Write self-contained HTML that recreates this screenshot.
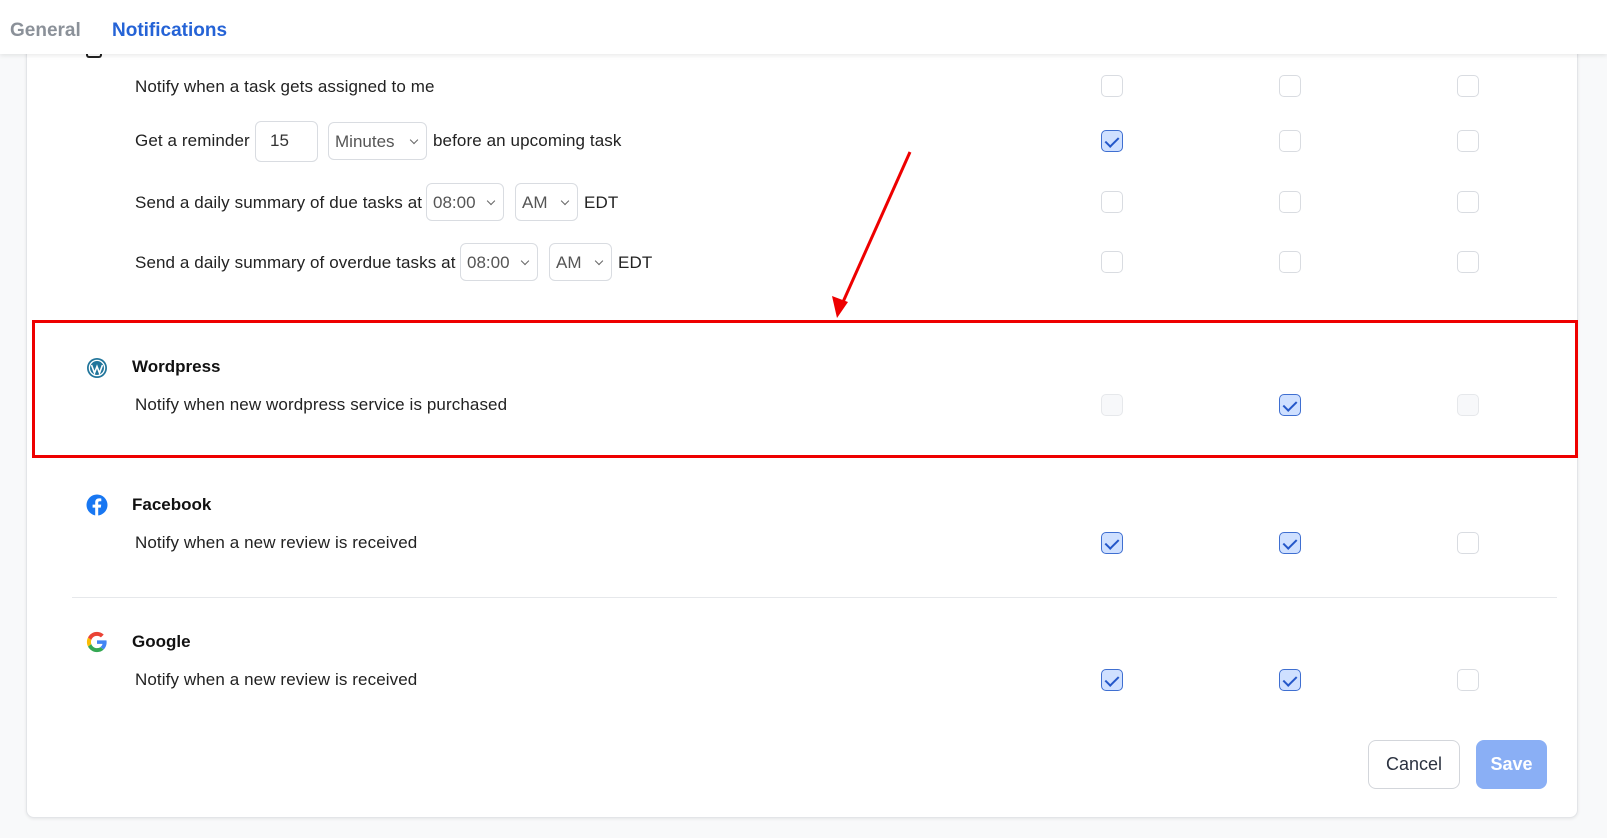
<!DOCTYPE html>
<html><head><meta charset="utf-8"><style>
*{box-sizing:border-box;margin:0;padding:0}
body{width:1607px;height:838px;background:#f8f9fa;font-family:"Liberation Sans",sans-serif;position:relative;overflow:hidden;color:#1f2328}
.card{position:absolute;left:26px;top:0;width:1552px;height:818px;background:#fff;border:1px solid #e3e5e8;border-radius:8px;box-shadow:0 1px 3px rgba(0,0,0,.08)}
.hdr{position:absolute;left:0;top:0;width:1607px;height:54px;background:#fff;box-shadow:0 2px 4px rgba(0,0,0,.08);z-index:5}
.tab{position:absolute;top:20px;font-size:19px;font-weight:bold}
.t{position:absolute;font-size:17px;letter-spacing:0.1px;white-space:nowrap;line-height:20px;color:#222}
.h{position:absolute;font-size:17px;font-weight:bold;line-height:20px;color:#111}
.cb{position:absolute;width:22px;height:22px;border:1.5px solid #d9dce1;border-radius:5px;background:#fff}
.cb.d{background:#f7f8fa;border-color:#e6e8eb}
.cb.c{background:#cfe0ff;border-color:#3f6fd1}
.cb.c::after{content:"";position:absolute;left:6px;top:2.5px;width:6px;height:11px;border:solid #2457c9;border-width:0 2.5px 2.5px 0;transform:rotate(45deg)}
.sel{position:absolute;height:38px;border:1px solid #d9dce1;border-radius:6px;font-size:17px;color:#555;padding:9px 6px;line-height:20px}
.sel.dd::after{content:"";position:absolute;right:9px;top:14px;width:5px;height:5px;border:solid #666;border-width:0 1.3px 1.3px 0;transform:rotate(45deg)}
</style></head><body>
<div class="card"></div>
<div class="hdr">
<div class="tab" style="left:10px;color:#8b9199">General</div>
<div class="tab" style="left:112px;color:#2563d6">Notifications</div>
</div>
<div style="position:absolute;left:86px;top:48px;width:16px;height:10px;border:2px solid #222;border-top:none;border-radius:0 0 3px 3px"></div>

<div class="t" style="left:135px;top:77px">Notify when a task gets assigned to me</div>
<div class="t" style="left:135px;top:131px">Get a reminder</div>
<div class="sel" style="left:255px;top:121px;width:63px;height:41px;color:#333;padding-left:14px">15</div>
<div class="sel dd" style="left:328px;top:122px;width:99px;">Minutes</div>
<div class="t" style="left:433px;top:131px">before an upcoming task</div>
<div class="t" style="left:135px;top:193px">Send a daily summary of due tasks at</div>
<div class="sel dd" style="left:426px;top:183px;width:78px">08:00</div>
<div class="sel dd" style="left:515px;top:183px;width:63px">AM</div>
<div class="t" style="left:584px;top:193px">EDT</div>
<div class="t" style="left:135px;top:253px">Send a daily summary of overdue tasks at</div>
<div class="sel dd" style="left:460px;top:243px;width:78px">08:00</div>
<div class="sel dd" style="left:549px;top:243px;width:63px">AM</div>
<div class="t" style="left:618px;top:253px">EDT</div>

<div class="cb" style="left:1101px;top:75px"></div><div class="cb" style="left:1279px;top:75px"></div><div class="cb" style="left:1457px;top:75px"></div>
<div class="cb c" style="left:1101px;top:130px"></div><div class="cb" style="left:1279px;top:130px"></div><div class="cb" style="left:1457px;top:130px"></div>
<div class="cb" style="left:1101px;top:191px"></div><div class="cb" style="left:1279px;top:191px"></div><div class="cb" style="left:1457px;top:191px"></div>
<div class="cb" style="left:1101px;top:251px"></div><div class="cb" style="left:1279px;top:251px"></div><div class="cb" style="left:1457px;top:251px"></div>

<svg style="position:absolute;left:86px;top:357px" width="22" height="22" viewBox="0 0 22 22"><circle cx="11" cy="11" r="10" fill="#21759b"/><circle cx="11" cy="11" r="7.6" fill="none" stroke="#fff" stroke-width="1.3"/><path d="M5.5 8 L8.5 16 L11 9.5 L13.5 16 L16.5 8" fill="none" stroke="#fff" stroke-width="1.6"/></svg>
<div class="h" style="left:132px;top:357px">Wordpress</div>
<div class="t" style="left:135px;top:395px">Notify when new wordpress service is purchased</div>
<div class="cb d" style="left:1101px;top:394px"></div><div class="cb c" style="left:1279px;top:394px"></div><div class="cb d" style="left:1457px;top:394px"></div>

<div style="position:absolute;left:32px;top:320px;width:1546px;height:138px;border:3px solid #e00"></div>
<svg style="position:absolute;left:0;top:0" width="1607" height="838"><line x1="910" y1="152" x2="843" y2="302" stroke="#e00" stroke-width="3"/><polygon points="837,318 832,296 848,302" fill="#e00"/></svg>

<svg style="position:absolute;left:86px;top:494px" width="22" height="22" viewBox="0 0 22 22"><circle cx="11" cy="11" r="10.5" fill="#1877f2"/><path d="M12.2 21.5V13.6h2.6l.4-3h-3V8.7c0-.9.3-1.5 1.5-1.5h1.6V4.5c-.3 0-1.2-.1-2.3-.1-2.3 0-3.8 1.4-3.8 3.9v2.3H6.6v3h2.6v7.9z" fill="#fff"/></svg>
<div class="h" style="left:132px;top:495px">Facebook</div>
<div class="t" style="left:135px;top:533px">Notify when a new review is received</div>
<div class="cb c" style="left:1101px;top:532px"></div><div class="cb c" style="left:1279px;top:532px"></div><div class="cb" style="left:1457px;top:532px"></div>
<div style="position:absolute;left:72px;top:597px;width:1485px;height:1px;background:#e6e8eb"></div>

<svg style="position:absolute;left:86px;top:631px" width="22" height="22" viewBox="0 0 48 48"><path fill="#4285F4" d="M45 24.5c0-1.6-.1-2.8-.4-4.1H24v7.7h12c-.3 2-1.6 4.9-4.5 6.9l6.9 5.4C42.5 36.6 45 31.1 45 24.5z"/><path fill="#34A853" d="M24 46c5.9 0 10.9-2 14.5-5.4l-6.9-5.4c-1.9 1.3-4.4 2.2-7.6 2.2-5.8 0-10.7-3.8-12.5-9.1l-7.1 5.5C8 41.1 15.4 46 24 46z"/><path fill="#FBBC05" d="M11.5 28.3c-.5-1.4-.7-2.8-.7-4.3s.3-3 .7-4.3l-7.1-5.5C2.9 17.1 2 20.4 2 24s.9 6.9 2.4 9.8z"/><path fill="#EA4335" d="M24 10.6c4.1 0 6.9 1.8 8.5 3.3l6.2-6C34.9 4.3 29.9 2 24 2 15.4 2 8 6.9 4.4 14.2l7.1 5.5c1.8-5.3 6.7-9.1 12.5-9.1z"/></svg>
<div class="h" style="left:132px;top:632px">Google</div>
<div class="t" style="left:135px;top:670px">Notify when a new review is received</div>
<div class="cb c" style="left:1101px;top:669px"></div><div class="cb c" style="left:1279px;top:669px"></div><div class="cb" style="left:1457px;top:669px"></div>

<div style="position:absolute;left:1368px;top:740px;width:92px;height:49px;border:1px solid #d3d6db;border-radius:8px;font-size:18px;color:#2b3240;text-align:center;line-height:47px">Cancel</div>
<div style="position:absolute;left:1476px;top:740px;width:71px;height:49px;background:#8aaff5;border-radius:8px;font-size:18px;font-weight:bold;color:#fff;text-align:center;line-height:49px">Save</div>
</body></html>
